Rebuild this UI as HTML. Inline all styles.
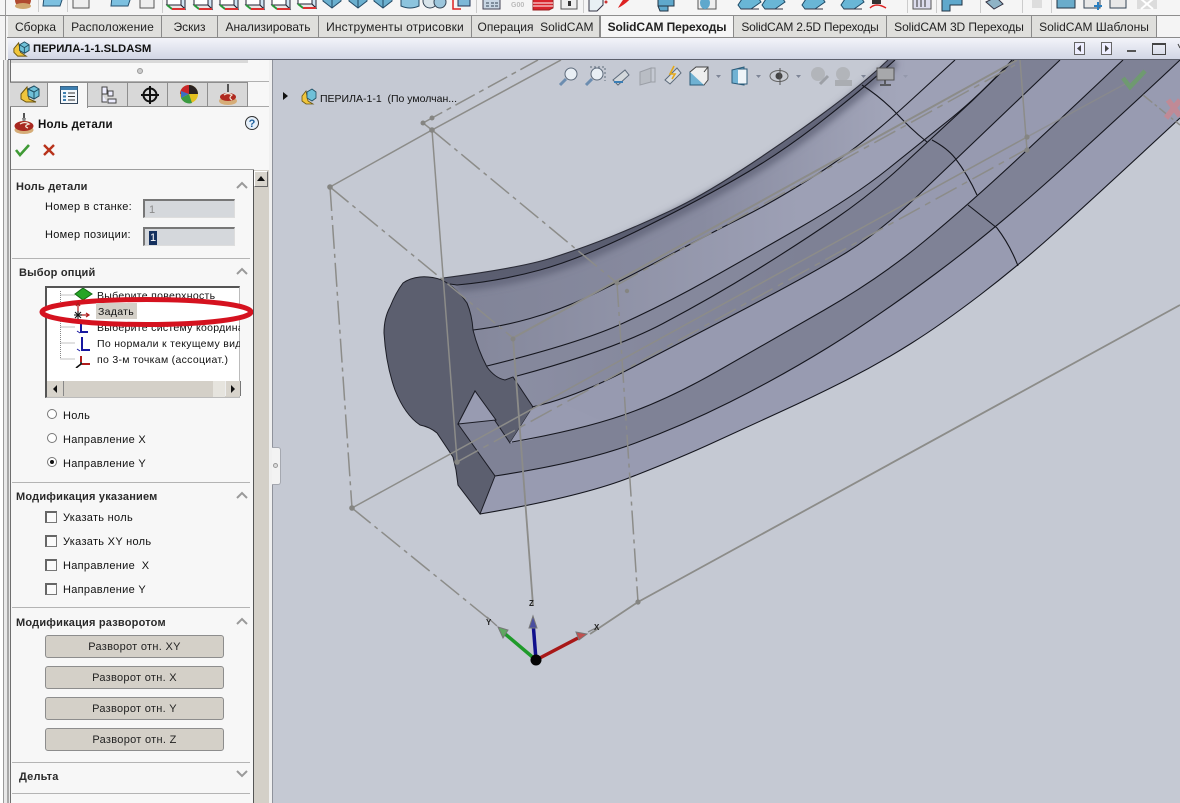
<!DOCTYPE html>
<html><head><meta charset="utf-8"><title>SolidCAM</title>
<style>
html,body{margin:0;padding:0;width:1180px;height:803px;overflow:hidden;background:#f4f4f4}
body{position:relative;font-family:"Liberation Sans",Arial,sans-serif;font-size:11px;color:#111}
.a{position:absolute}
.t{position:absolute;white-space:nowrap;line-height:14px;margin-top:1px}
.b{font-weight:bold;color:#2a2a2a;letter-spacing:.2px}
.tab{position:absolute;top:16px;height:21px;line-height:22px;text-align:center;font-size:12px;color:#222;background:#dfdfdc;border-right:1px solid #8a8a8a;box-sizing:border-box;white-space:nowrap}
.d{position:absolute;left:12px;width:238px;height:1px;background:#b4b4b4}
.pt{position:absolute;top:82px;height:25px;width:40px;box-sizing:border-box;background:#d8d8d8;border:1px solid #8e8e8e;border-left:0}
.btn{position:absolute;left:45px;width:179px;height:23px;box-sizing:border-box;background:#d4d0c8;border:1px solid #8d8d8d;border-radius:3px;text-align:center;line-height:23px;font-size:11px;color:#222;letter-spacing:.3px}
.inp{position:absolute;left:143px;width:92px;height:19px;box-sizing:border-box;background:#d5d8dc;border-top:2px solid #777;border-left:2px solid #777;border-right:1px solid #ddd;border-bottom:1px solid #ddd}
.cb{position:absolute;left:45px;width:12px;height:12px;box-sizing:border-box;background:#fafafa;border:1px solid #777;border-top:2px solid #666;border-left:2px solid #666}
.rd{position:absolute;left:47px;width:10px;height:10px;box-sizing:border-box;border-radius:50%;background:#fff;border:1px solid #777}
svg{display:block;overflow:hidden}
</style></head>
<body>
<!-- top toolbar -->
<svg class="a" style="left:0;top:0" width="1180" height="15" viewBox="0 0 1180 15">
<defs>
<g id="cu"><path d="M-8 -7V7H6V-7Z" fill="#fff" stroke="#223" stroke-width="1"/><path d="M-8 7L-3 11H10L6 7Z" fill="#e8e8e8" stroke="#223"/><path d="M6 -7L10 -2V11L6 7Z" fill="#cfe4f2" stroke="#223"/><path d="M-8 7L-3 11" stroke="#2a9a3a" stroke-width="2"/><path d="M-3 11H10" stroke="#d33" stroke-width="2"/></g>
<g id="sh"><path d="M-9 -6V3L0 10L9 3V-6Z" fill="#6bb0cf" stroke="#234a66"/><path d="M0 -6V10" stroke="#234a66"/></g>
<g id="fl"><path d="M-11 6L-5 -3H8L12 3L2 10H-8Z" fill="#69b6d6" stroke="#1f4a66"/><path d="M-8 10H10" stroke="#334"/></g>
</defs>
<rect width="1180" height="15" fill="#f5f5f5"/>
<rect x="5" width="1" height="15" fill="#999"/>
<circle cx="23" cy="0" r="8" fill="#b04a30"/><ellipse cx="23" cy="6" rx="8" ry="3" fill="#d0a870"/>
<rect x="38" width="1" height="12" fill="#ccc"/>
<path d="M44 -3H63L60 6H43Z" fill="#7cc0e0" stroke="#25506e"/>
<rect x="67" width="1" height="12" fill="#ccc"/>
<rect x="73" y="-3" width="16" height="11" fill="#eee" stroke="#555"/>
<path d="M112 -3H131L128 6H111Z" fill="#7cc0e0" stroke="#25506e"/>
<rect x="140" y="-3" width="14" height="11" fill="#eee" stroke="#555"/>
<rect x="162" width="1" height="13" fill="#ccc"/>
<use href="#cu" x="175" y="-2"/><use href="#cu" x="202" y="-2"/><use href="#cu" x="228" y="-2"/><use href="#cu" x="254" y="-2"/><use href="#cu" x="280" y="-2"/><use href="#cu" x="306" y="-3"/>
<use href="#sh" x="332" y="-2"/><use href="#sh" x="358" y="-2"/><use href="#sh" x="383" y="-2"/>
<path d="M401 -2V6Q410 10 419 6V-2Z" fill="#8cc4de" stroke="#234a66"/>
<circle cx="430" cy="1" r="7" fill="#d8e4ea" stroke="#345"/><circle cx="440" cy="2" r="6" fill="#9cc6dc" stroke="#345"/>
<path d="M453 0V9H461" fill="none" stroke="#d22" stroke-width="1.5"/><path d="M458 -2H470V6H458Z" fill="#7db8d8" stroke="#235"/>
<rect x="476" width="1" height="13" fill="#ccc"/>
<rect x="483" y="-2" width="17" height="11" fill="#c8d6e4" stroke="#445"/><path d="M486 3h3M491 3h3M495 3h3M486 6h3M491 6h3M495 6h3" stroke="#345"/>
<text x="511" y="7" font-size="7" font-weight="bold" fill="#bbb" font-family="Liberation Sans">G00</text>
<path d="M533 -2H553V8L549 10H533Z" fill="#d8242c" stroke="#922"/><path d="M533 3H553M533 6H553" stroke="#fff"/>
<rect x="561" y="-2" width="16" height="11" fill="#eee" stroke="#555"/><rect x="568" y="1" width="3" height="5" fill="#333"/>
<rect x="583" width="1" height="13" fill="#ccc"/>
<path d="M589 -2H603V5L597 11H589Z" fill="#e8f0f4" stroke="#334"/><circle cx="606" cy="2" r="1.5" fill="#c33"/>
<path d="M618 8Q626 4 632 -3L625 -3Q620 4 618 8Z" fill="#d22"/>
<path d="M658 -2H674V6H658ZM658 6L660 11H668V6" fill="#5fa8cc" stroke="#234"/>
<rect x="698" y="-2" width="18" height="11" fill="#eee" stroke="#555"/><ellipse cx="705" cy="3" rx="5" ry="6" fill="#5fa8cc"/>
<use href="#fl" x="749" y="-1"/><use href="#fl" x="773" y="-1"/><use href="#fl" x="813" y="-1"/><use href="#fl" x="852" y="-1"/>
<path d="M870 8Q876 2 886 8" fill="none" stroke="#d22" stroke-width="1.5"/><rect x="872" y="-2" width="9" height="6" fill="#333"/>
<rect x="907" width="1" height="13" fill="#ccc"/>
<rect x="913" y="-2" width="18" height="11" fill="#dde" stroke="#555"/><path d="M917 0v7M921 0v7M925 0v7" stroke="#333"/>
<rect x="936" width="1" height="13" fill="#ccc"/>
<path d="M942 -2H962V5H950V11H942Z" fill="#5fa8cc" stroke="#234"/>
<rect x="980" width="1" height="13" fill="#ccc"/>
<path d="M986 2L996 -3L1003 4L994 9Z" fill="#8fb3c6" stroke="#334"/>
<rect x="1022" width="1" height="13" fill="#ccc"/>
<path d="M1032 -2H1042V8H1032Z" fill="#ddd"/>
<rect x="1051" width="1" height="13" fill="#ccc"/>
<rect x="1057" y="-2" width="18" height="10" fill="#6aaccb" stroke="#234"/><rect x="1084" y="-2" width="16" height="10" fill="#e8e8e8" stroke="#345"/><path d="M1098 2v8M1094 6h8" stroke="#2a7fc0" stroke-width="2"/><rect x="1110" y="-2" width="16" height="10" fill="#e8e8e8" stroke="#345"/>
<rect x="1137" y="-2" width="20" height="11" fill="#dcdcdc"/><path d="M1141 -1L1153 9M1153 -1L1141 9" stroke="#fff" stroke-width="2"/>
</svg>
<!-- ribbon tabs -->
<div class="a" style="left:0;top:15px;width:1180px;height:1px;background:#8e8e8e"></div>
<div class="a" style="left:5px;top:15px;width:1px;height:788px;background:#999"></div>
<div class="a" style="left:8px;top:16px;width:1148px;height:21px;background:#dfdfdc"></div>
<div class="tab" style="left:8px;width:56px">Сборка</div>
<div class="tab" style="left:64px;width:98px;letter-spacing:.1px">Расположение</div>
<div class="tab" style="left:162px;width:56px">Эскиз</div>
<div class="tab" style="left:218px;width:101px">Анализировать</div>
<div class="tab" style="left:319px;width:153px;letter-spacing:.15px">Инструменты отрисовки</div>
<div class="tab" style="left:472px;width:128px">Операция&nbsp; SolidCAM</div>
<div class="tab" style="left:600px;width:134px;background:#f6f6f6;font-weight:bold;border-left:1px solid #8a8a8a;letter-spacing:-.1px">SolidCAM Переходы</div>
<div class="tab" style="left:734px;width:153px;letter-spacing:-.2px">SolidCAM 2.5D Переходы</div>
<div class="tab" style="left:887px;width:145px;letter-spacing:-.1px">SolidCAM 3D Переходы</div>
<div class="tab" style="left:1032px;width:125px">SolidCAM Шаблоны</div>
<div class="a" style="left:7px;top:37px;width:1173px;height:1px;background:#8a8a8a"></div>
<!-- title bar -->
<div class="a" style="left:8px;top:38px;width:1172px;height:21px;background:linear-gradient(#f3f4fa,#d2d6e5)"></div>
<div class="a" style="left:8px;top:59px;width:1172px;height:1px;background:#5c5f6c"></div>
<svg class="a" style="left:12px;top:40px" width="19" height="19" viewBox="0 0 20 20"><path d="M2 9L7 3L9 13L15 17H6L2 13Z" fill="#f0c53c" stroke="#6b5510"/><path d="M8 5L13 2L18 5V11L13 14L8 11Z" fill="#6fc0d8" stroke="#1e4c60"/><path d="M8 5L13 8L18 5M13 8V14" fill="none" stroke="#1e4c60"/></svg>
<div class="t" style="left:33px;top:41px;font-size:11.3px;font-weight:bold;color:#111">ПЕРИЛА-1-1.SLDASM</div>
<svg class="a" style="left:1070px;top:40px" width="110" height="17" viewBox="0 0 110 17"><rect x="4.5" y="2.5" width="10" height="12" fill="#eef" stroke="#666"/><path d="M11 5V12L7 8.5Z" fill="#444"/><rect x="31.5" y="2.5" width="10" height="12" fill="#eef" stroke="#666"/><path d="M35 5V12L39 8.5Z" fill="#444"/><rect x="57" y="10" width="9" height="2" fill="#555"/><rect x="82.5" y="3.5" width="13" height="11" fill="none" stroke="#444"/><rect x="82" y="3" width="14" height="2" fill="#444"/><path d="M108 4L110 8" stroke="#444"/></svg>

<!-- viewport -->
<div class="a" style="left:272px;top:60px;width:908px;height:743px;background:#c5c9d3"></div>
<svg class="a" style="left:272px;top:60px" width="908" height="743" viewBox="272 60 908 743">
<defs>
<linearGradient id="g1" gradientUnits="userSpaceOnUse" x1="443" y1="0" x2="880" y2="0"><stop offset="0" stop-color="#5b5e70"/><stop offset=".5" stop-color="#5a5d6f"/><stop offset="1" stop-color="#6d7084"/></linearGradient>
<linearGradient id="g2" gradientUnits="userSpaceOnUse" x1="460" y1="0" x2="900" y2="0"><stop offset="0" stop-color="#818498"/><stop offset=".55" stop-color="#888ba0"/><stop offset="1" stop-color="#a3a6ba"/></linearGradient>
<linearGradient id="g3" gradientUnits="userSpaceOnUse" x1="480" y1="0" x2="800" y2="0"><stop offset="0" stop-color="#85889c"/><stop offset="1" stop-color="#9da0b5"/></linearGradient>
<linearGradient id="g4" gradientUnits="userSpaceOnUse" x1="520" y1="0" x2="800" y2="0"><stop offset="0" stop-color="#8b8ea3"/><stop offset="1" stop-color="#7e8195"/></linearGradient>
<filter id="bl" x="-10%" y="-10%" width="120%" height="120%"><feGaussianBlur stdDeviation="4"/></filter>
</defs>
<!-- painter layers -->
<path fill="url(#g1)" d="M443 278Q520 268 551.5 258Q583 248 611.5 236.5Q640 225 670 211Q700 197 740 171Q780 145 821 115Q862 85 888 60L1180 60V803H480V514L470 440Z"/>
<path fill="url(#g2)" d="M450 284L457 285Q500 281 540 270Q580 259 635 232Q690 205 735 179.5Q780 154 822.5 120.5Q865 87 895 60L1180 60V803H480V514L470 440Z"/>
<path fill="none" stroke="#5c5f73" stroke-width="7" filter="url(#bl)" d="M457 287Q500 283 540 272Q580 261 635 234Q690 207 735 181.5Q780 156 822.5 122.5Q865 89 895 62"/>
<path fill="url(#g3)" d="M473 330Q500 327 530 318.5Q560 310 588.5 296.5Q617 283 665 257.5Q713 232 744 216.5Q775 201 817.5 174Q860 147 908 103L955 60L1180 60V803H480V514L470 440Z"/>
<path fill="#85889c" d="M487 366Q580 343 623.5 323Q667 303 707 280.5Q747 258 800 227.5Q853 197 888 169Q923 141 951.5 118Q980 95 1012 60L1180 60V803H480V514L470 440Z"/>
<path fill="url(#g4)" d="M517 376Q613 350 663 323.5Q713 297 756.5 270Q800 243 835 219Q870 195 900 167.5Q930 140 972 101L1014 60L1180 60V803H480V514L470 440Z"/>
<path fill="#979ab0" d="M532 407Q573 398 626.5 370.5Q680 343 746.5 308Q813 273 846.5 252.5Q880 232 918.5 195L1060 60L1180 60V803H480V514L470 440Z"/>
<path fill="#7f8296" d="M512 442Q580 430 623.5 415Q667 400 717 371.5Q767 343 823.5 310.5Q880 278 924 241.5Q968 205 1017.5 159Q1067 113 1123 60L1180 60V803H480V514L458 424L496 420Z"/>
<path fill="#989bb1" d="M495 476Q580 463 630 445Q680 427 730 402Q780 377 828 347.5Q876 318 936.5 273Q997 228 1070 161.5Q1143 95 1180 60V803H480V514Z"/>
<path fill="#c5c9d3" d="M480 514Q580 497 630 477.5Q680 458 713.5 442.5Q747 427 780 412Q813 397 846.5 380Q880 363 911 343.5Q942 324 980 295Q1018 266 1057.5 230.5Q1097 195 1180 118V803H440V514Z"/>
<!-- profile -->
<path fill="#5c5f6f" stroke="#1c1d26" stroke-width="1" d="M442 280Q430 276 420 277Q410 278 403 283Q396 292 390 307Q384 318 384 333Q386 365 395 390Q405 415 420 425Q430 427 437 433L453 457L456 470L458 485L480 514L495 476L458 424L475 391L510 443L533 407L513 377L505 380Q495 378 487 367Q478 350 473 330Q472 315 467 303Q458 290 447 283Z"/>
<path fill="#989bb1" stroke="#1c1d26" d="M475 391L458 424L496 420Z"/>
<path fill="#989bb1" d="M510 443L533 407L560 402L600 420L530 440Z"/>
<g fill="none" stroke="#15161e" stroke-width="1.1">
<path stroke="#2a2b36" d="M443 278Q520 268 551.5 258Q583 248 611.5 236.5Q640 225 670 211Q700 197 740 171Q780 145 821 115Q862 85 888 60"/>
<path d="M450 284L457 285Q500 281 540 270Q580 259 635 232Q690 205 735 179.5Q780 154 822.5 120.5Q865 87 895 60"/>
<path d="M473 330Q500 327 530 318.5Q560 310 588.5 296.5Q617 283 665 257.5Q713 232 744 216.5Q775 201 817.5 174Q860 147 908 103L955 60"/>
<path d="M487 366Q580 343 623.5 323Q667 303 707 280.5Q747 258 800 227.5Q853 197 888 169Q923 141 951.5 118Q980 95 1012 60"/>
<path d="M517 376Q613 350 663 323.5Q713 297 756.5 270Q800 243 835 219Q870 195 900 167.5Q930 140 972 101L1014 60"/>
<path d="M532 407Q573 398 626.5 370.5Q680 343 746.5 308Q813 273 846.5 252.5Q880 232 918.5 195L1060 60"/>
<path d="M512 442Q580 430 623.5 415Q667 400 717 371.5Q767 343 823.5 310.5Q880 278 924 241.5Q968 205 1017.5 159Q1067 113 1123 60"/>
<path d="M495 476Q580 463 630 445Q680 427 730 402Q780 377 828 347.5Q876 318 936.5 273Q997 228 1070 161.5Q1143 95 1180 60"/>
<path d="M480 514Q580 497 630 477.5Q680 458 713.5 442.5Q747 427 780 412Q813 397 846.5 380Q880 363 911 343.5Q942 324 980 295Q1018 266 1057.5 230.5Q1097 195 1180 118"/>
<path d="M862 85Q882 98 898 115Q912 130 927 142"/>
<path d="M932 140Q947 148 955 158Q968 175 977 195"/>
<path d="M968 205L997 228Q1010 245 1018 266"/>
</g>
<!-- wireframe -->
<g fill="none" stroke="#8c8c89" stroke-width="1.5">
<path d="M330 187L432 130L561 60"/>
<path d="M423 123L432 118L538 60" stroke-dasharray="22 5 5 5"/>
<path d="M423 123L432 130"/>
<path d="M432 130L457 460"/>
<path d="M330 187L352 508" stroke-dasharray="24 5 4 5"/>
<path d="M330 187L443 280L513 338" stroke-dasharray="24 5 4 5"/>
<path d="M432 130L617 283" stroke-dasharray="24 5 4 5"/>
<path d="M352 508L490 620" stroke-dasharray="24 5 4 5"/>
<path d="M352 508L1027 137"/>
<path d="M457 462L1027 149" stroke-dasharray="24 6 6 6"/>
<path d="M513 338L1017 60" stroke-width="2"/>
<path d="M617 285L1015 65" stroke-dasharray="24 6 6 6"/>
<path d="M513 338L533 605" stroke-width="1.8"/>
<path d="M617 283L638 602" stroke-dasharray="24 5 4 5"/>
<path d="M1020 60L1027 150"/>
<path d="M1027 137L1125 84" opacity=".7"/>
<path d="M1143 95L1180 125" stroke-dasharray="12 3 3 3"/>
<path d="M590 634L638 602L1180 305" stroke-width="1.8"/>
</g>
<g fill="#858582"><circle cx="330" cy="187" r="2.8"/><circle cx="432" cy="130" r="2.8"/><circle cx="423" cy="123" r="2.5"/><circle cx="432" cy="118" r="2.5"/><circle cx="352" cy="508" r="2.8"/><circle cx="457" cy="462" r="2.8"/><circle cx="513" cy="339" r="2.5"/><circle cx="617" cy="283" r="2.5"/><circle cx="627" cy="291" r="2.2"/><circle cx="638" cy="602" r="2.6"/><circle cx="1027" cy="137" r="2.6"/><circle cx="1027" cy="150" r="2.6"/></g>
<!-- triad -->
<path d="M536 660L504 633" stroke="#1f9a2a" stroke-width="3.5"/>
<path d="M536 660L533 622" stroke="#10108c" stroke-width="3.5"/>
<path d="M536 660L578 638" stroke="#a81818" stroke-width="3.5"/>
<path d="M498 627L508 630L503 638Z" fill="#5fa860" stroke="#777"/>
<path d="M533 616L537 628H529Z" fill="#4a4ea0" stroke="#777"/>
<path d="M587 634L576 632L579 640Z" fill="#c05050" stroke="#777"/>
<path d="M588 632L596 628M487 617L497 626" stroke="#888" stroke-width="1.4"/>
<circle cx="536" cy="660" r="5.5" fill="#050505"/>
<g font-family="Liberation Sans" font-size="8" font-weight="bold" fill="#222"><text x="529" y="606">Z</text><text x="486" y="625">Y</text><text x="594" y="630">X</text></g>
<!-- check + x overlay -->
<path d="M1123 78L1130 87L1145 71" fill="none" stroke="#6f9a70" stroke-width="4.5"/>
<path d="M1168 100L1180 116M1180 100L1166 118" stroke="#c08a96" stroke-width="5.5"/>
<!-- heads up toolbar -->
<g fill="none" stroke="#5d6a7a">
<circle cx="571" cy="74" r="6" fill="#e8eef4"/><path d="M566 79L560 85" stroke="#6c8db0" stroke-width="3"/>
<circle cx="597" cy="74" r="6" fill="#e8eef4"/><path d="M592 79L586 85" stroke="#6c8db0" stroke-width="3"/><path d="M590 67h15v14" stroke-dasharray="2 2"/>
<path d="M613 80L625 70L629 75L618 85Z" fill="#d4d8dc"/><path d="M623 82H614" stroke="#3b7eb5" stroke-width="2"/>
<path d="M640 72L651 68V82L640 85Z" fill="#b9bdc4" stroke="#9a9ea6"/><path d="M651 68H655V82H651" stroke="#9a9ea6"/>
<path d="M665 80L677 68L681 73L670 84Z" fill="#d8dce0"/><path d="M674 66L670 74H675L672 79" stroke="#e5a918" stroke-width="1.6"/>
<path d="M690 72H704V85H690Z" fill="#6fb1d2" stroke="#2a5a78"/><path d="M690 72L696 67H708V80L704 85M704 72L708 67" stroke="#444" fill="#eee"/>
<path d="M732 70L744 67V85L732 83Z" fill="#71b2d3" stroke="#2a5a78"/><path d="M738 69H747V84H738" fill="#eef4f8" stroke="#2a5a78"/>
</g>
<ellipse cx="779" cy="76" rx="9" ry="5.5" fill="#c8cbd2" stroke="#666"/><circle cx="779" cy="76" r="3.5" fill="#444"/><path d="M780 68V85" stroke="#555"/>
<g fill="#b2b5ba"><circle cx="818" cy="74" r="7"/><circle cx="843" cy="74" r="7"/></g>
<path d="M820 84L828 76" stroke="#9da0a6" stroke-width="3"/><rect x="835" y="80" width="17" height="6" fill="#aaadb2"/>
<rect x="877" y="68" width="17" height="12" fill="#a7a8ab" stroke="#555"/><path d="M885 80V84M880 85H891" stroke="#444" stroke-width="1.5"/>
<g fill="#7e8596"><path d="M716 75h5l-2.5 3zM756 75h5l-2.5 3zM796 75h5l-2.5 3zM861 75h5l-2.5 3z"/><path d="M903 75h5l-2.5 3z" opacity=".4"/></g>
<!-- tree node -->
<path d="M283 92L288 96L283 100Z" fill="#111"/>
<path d="M302 96L306 91L308 101L313 104H306L302 101Z" fill="#f0c53c" stroke="#6b5510" stroke-width=".8"/><path d="M307 92L312 89L316 92V98L312 101L307 98Z" fill="#6fc0d8" stroke="#1e4c60" stroke-width=".8"/>
<text x="320" y="102" font-family="Liberation Sans" font-size="10.5" fill="#111">ПЕРИЛА-1-1&#160; (По умолчан...</text>
</svg>

<!-- left panel -->
<div class="a" style="left:0;top:60px;width:3px;height:743px;background:#fff"></div>
<div class="a" style="left:3px;top:60px;width:1px;height:743px;background:#9a9a9a"></div>
<div class="a" style="left:4px;top:60px;width:6px;height:743px;background:#e9e9e9"></div>
<div class="a" style="left:7px;top:60px;width:2px;height:743px;background:#a8a8a8"></div>
<div class="a" style="left:10px;top:60px;width:1px;height:743px;background:#6f6f6f"></div>
<div class="a" style="left:11px;top:60px;width:243px;height:743px;background:#f7f7f7"></div>
<div class="a" style="left:11px;top:60px;width:237px;height:3px;background:#d9d9d9"></div>
<div class="a" style="left:253px;top:60px;width:19px;height:743px;background:#f7f7f7"></div>
<div class="a" style="left:137px;top:68px;width:6px;height:6px;border-radius:50%;background:#ccc;border:1px solid #999;box-sizing:border-box"></div>
<div class="a" style="left:11px;top:81px;width:259px;height:1px;background:#b0b0b0"></div>
<div class="a" style="left:11px;top:106px;width:259px;height:1px;background:#a8a8a8"></div>
<div class="pt" style="left:10px;width:38px"></div>
<div class="pt" style="left:48px;background:#f7f7f7;border-bottom:0;height:26px"></div>
<div class="pt" style="left:88px"></div>
<div class="pt" style="left:128px"></div>
<div class="pt" style="left:168px"></div>
<div class="pt" style="left:208px"></div>
<svg class="a" style="left:10px;top:82px" width="240" height="25" viewBox="0 0 240 25">
<path d="M11 12L17 5L19 17L26 20H16L11 17Z" fill="#f0c53c" stroke="#6b5510"/><path d="M18 7L24 4L29 7V14L24 17L18 14Z" fill="#6fc0d8" stroke="#1e4c60"/><path d="M18 7L24 10L29 7M24 10V17" fill="none" stroke="#1e4c60"/>
<rect x="50.5" y="4.5" width="17" height="17" fill="#f4f8fc" stroke="#33465a"/><rect x="50.5" y="4.5" width="17" height="3.5" fill="#3d7fb0"/><path d="M53 11h3M53 14.5h3M53 18h3" stroke="#3d7fb0" stroke-width="2"/><path d="M58 11h7M58 14.5h7M58 18h7" stroke="#333"/>
<path d="M92 5h5v7h-5zM92 12v8h5M98 9h5v5h-5zM98 17h8v4h-8zM97 8h1" fill="#eef" stroke="#444"/>
<circle cx="140" cy="13" r="6.5" fill="none" stroke="#111" stroke-width="2"/><path d="M140 4V22M131 13H149" stroke="#111" stroke-width="2"/>
<circle cx="179" cy="12" r="9" fill="#e4c020"/><path d="M179 3A9 9 0 0 1 188 12L179 12Z" fill="#2a2222"/><path d="M170 12A9 9 0 0 1 179 3V12Z" fill="#c8262a"/><path d="M171 16A9 9 0 0 0 182 21L179 12Z" fill="#3a9a40"/><path d="M171 9L179 12L171 16Z" fill="#3a6fc0"/>
<rect x="217" y="2" width="2" height="8" fill="#555"/><ellipse cx="218" cy="19" rx="9" ry="4" fill="#d6ad78"/><ellipse cx="218" cy="15" rx="8" ry="4" fill="#b02a20"/><path d="M214 13Q218 10 222 13Q218 16 222 18" fill="none" stroke="#f0e0d0" stroke-width="1.2"/>
</svg>
<!-- header -->
<svg class="a" style="left:14px;top:113px" width="22" height="22" viewBox="0 0 22 22"><rect x="9" y="0" width="2" height="8" fill="#555"/><path d="M8 5h4l-1 5h-2z" fill="#888"/><ellipse cx="10" cy="17" rx="9.5" ry="4" fill="#d6ad78"/><ellipse cx="10" cy="13" rx="9.5" ry="5" fill="#a82820"/><path d="M6 11Q11 8 15 11Q9 13 14 15" fill="none" stroke="#f2e6d8" stroke-width="1.3"/></svg>
<div class="t b" style="left:38px;top:117px;font-size:11.5px;color:#111">Ноль детали</div>
<svg class="a" style="left:244px;top:115px" width="16" height="16" viewBox="0 0 16 16"><circle cx="8" cy="8" r="6.5" fill="#e6f0fa" stroke="#333"/><text x="8" y="12" text-anchor="middle" font-size="11" font-weight="bold" fill="#1c5f9c" font-family="Liberation Sans">?</text></svg>
<svg class="a" style="left:14px;top:142px" width="45" height="16" viewBox="0 0 45 16"><path d="M2 8L6 13L15 3" fill="none" stroke="#3f9a35" stroke-width="2.6"/><path d="M30 3L40 13M40 3L30 13" stroke="#b8321a" stroke-width="2.4"/></svg>
<div class="d" style="top:169px;left:11px;width:243px;background:#9e9e9e"></div>

<!-- section 1 -->
<div class="t b" style="left:16px;top:179px">Ноль детали</div>
<div class="t" style="left:45px;top:199px;letter-spacing:.3px">Номер в станке:</div>
<div class="inp" style="top:199px"><span style="position:absolute;left:4px;top:2px;color:#8a8a8a;font-size:11px;line-height:14px">1</span></div>
<div class="t" style="left:45px;top:227px;letter-spacing:.3px">Номер позиции:</div>
<div class="inp" style="top:227px"><span style="position:absolute;left:4px;top:2px;width:8px;height:14px;background:#14305e;color:#fff;font-size:11px;line-height:14px;text-align:center">1</span></div>
<div class="d" style="top:258px"></div>
<div class="t b" style="left:19px;top:265px">Выбор опций</div>
<!-- chevrons -->
<svg class="a" style="left:234px;top:180px" width="16" height="560" viewBox="0 0 16 560"><g fill="none" stroke="#9a9a9a" stroke-width="2"><path d="M3 8L8 3L13 8"/><path d="M3 94L8 89L13 94"/><path d="M3 318L8 313L13 318"/><path d="M3 444L8 439L13 444"/></g></svg>
<svg class="a" style="left:234px;top:768px" width="16" height="12" viewBox="0 0 16 12"><path d="M3 3L8 8L13 3" fill="none" stroke="#9a9a9a" stroke-width="2"/></svg>

<!-- list box -->
<div class="a" style="left:45px;top:286px;width:195px;height:112px;box-sizing:border-box;background:#fff;border:1px solid #bbb;border-top:2px solid #555;border-left:2px solid #555"></div>
<svg class="a" style="left:47px;top:288px" width="192" height="78" viewBox="0 0 192 78"><path d="M13.5 3V71M13.5 7H28M13.5 23H28M13.5 39H28M13.5 55H28M13.5 71H28" fill="none" stroke="#888" stroke-dasharray="1 1"/><path d="M28 6L36 0L45 6L36 12Z" fill="#25a525" stroke="#146a14"/></svg>
<div class="t" style="left:97px;top:288px;font-size:10.5px;letter-spacing:.3px">Выберите поверхность</div>
<div class="t" style="left:97px;top:320px;font-size:10.5px;letter-spacing:.3px;width:143px;overflow:hidden">Выберите систему координат</div>
<div class="t" style="left:97px;top:336px;font-size:10.5px;letter-spacing:.3px;width:143px;overflow:hidden">По нормали к текущему виду</div>
<div class="t" style="left:97px;top:352px;font-size:10.5px;letter-spacing:.3px">по 3-м точкам (ассоциат.)</div>
<svg class="a" style="left:72px;top:318px" width="24" height="50" viewBox="0 0 24 50"><g fill="none" stroke="#1818a0" stroke-width="2"><path d="M9 3V14H16"/><path d="M10 19V32H18"/></g><path d="M5 13l3 2M5 31l3 2" stroke="#1818a0"/><path d="M9 38V46M9 46L4 50M9 46H18" stroke="#111" stroke-width="1.6"/><path d="M9 38V44" stroke="#b01c1c" stroke-width="2"/><path d="M10 46H18" stroke="#b01c1c" stroke-width="2"/></svg>
<!-- list scrollbar -->
<div class="a" style="left:47px;top:381px;width:192px;height:16px;background:#d4d0c8"></div>
<div class="a" style="left:213px;top:381px;width:12px;height:16px;background:#e6e4de"></div>
<div class="a" style="left:47px;top:381px;width:16px;height:15px;background:#d8d4cc;border-right:1px solid #888"></div>
<div class="a" style="left:225px;top:381px;width:14px;height:15px;background:#d8d4cc;border-left:1px solid #eee;border-right:1px solid #777"></div>
<svg class="a" style="left:47px;top:381px" width="192" height="16" viewBox="0 0 192 16"><path d="M10 4V12L6 8Z" fill="#111"/><path d="M184 4V12L188 8Z" fill="#111"/></svg>
<!-- red ellipse -->
<svg class="a" style="left:36px;top:292px" width="222" height="40" viewBox="36 292 222 40"><ellipse cx="146.5" cy="312" rx="104.5" ry="12.5" fill="#fff" stroke="#d5121f" stroke-width="5"/></svg>
<div class="a" style="left:96px;top:303px;width:41px;height:16px;background:#d4d0c8"></div>
<div class="t" style="left:98px;top:304px;font-size:10.5px;letter-spacing:.3px">Задать</div>
<svg class="a" style="left:72px;top:302px" width="20" height="20" viewBox="0 0 20 20"><path d="M6 2V11M4 4L6 1L8 4" fill="none" stroke="#b01c1c" stroke-width="1.2"/><path d="M8 13H16M14 11L17 13L14 15" fill="none" stroke="#b01c1c" stroke-width="1.2"/><path d="M2 13H10M6 9V17M3 10L9 16M9 10L3 16" stroke="#111"/></svg>

<!-- radios -->
<div class="rd" style="top:409px"></div><div class="t" style="left:63px;top:408px;letter-spacing:.3px">Ноль</div>
<div class="rd" style="top:433px"></div><div class="t" style="left:63px;top:432px;letter-spacing:.3px">Направление X</div>
<div class="rd" style="top:457px"></div><div class="a" style="left:50px;top:460px;width:4px;height:4px;border-radius:50%;background:#111"></div><div class="t" style="left:63px;top:456px;letter-spacing:.3px">Направление Y</div>
<div class="d" style="top:482px"></div>
<!-- mod -->
<div class="t b" style="left:16px;top:489px">Модификация указанием</div>
<div class="cb" style="top:511px"></div><div class="t" style="left:63px;top:510px;letter-spacing:.3px">Указать ноль</div>
<div class="cb" style="top:535px"></div><div class="t" style="left:63px;top:534px;letter-spacing:.3px">Указать XY ноль</div>
<div class="cb" style="top:559px"></div><div class="t" style="left:63px;top:558px;letter-spacing:.3px">Направление&nbsp; X</div>
<div class="cb" style="top:583px"></div><div class="t" style="left:63px;top:582px;letter-spacing:.3px">Направление Y</div>
<div class="d" style="top:607px"></div>
<div class="t b" style="left:16px;top:615px">Модификация разворотом</div>
<div class="btn" style="top:635px">Разворот отн. XY</div>
<div class="btn" style="top:666px">Разворот отн. X</div>
<div class="btn" style="top:697px">Разворот отн. Y</div>
<div class="btn" style="top:728px">Разворот отн. Z</div>
<div class="d" style="top:762px"></div>
<div class="t b" style="left:19px;top:769px">Дельта</div>
<div class="d" style="top:793px"></div>
<!-- scrollbar -->
<div class="a" style="left:253px;top:170px;width:1px;height:633px;background:#555"></div>
<div class="a" style="left:254px;top:170px;width:15px;height:633px;background:#d4d0c8"></div>
<div class="a" style="left:254px;top:171px;width:14px;height:16px;box-sizing:border-box;background:#d8d4cc;border:1px solid #fff;border-right-color:#666;border-bottom-color:#666"></div>
<svg class="a" style="left:254px;top:171px" width="14" height="16" viewBox="0 0 14 16"><path d="M3 10H11L7 5Z" fill="#111"/></svg>
<div class="a" style="left:269px;top:60px;width:3px;height:743px;background:#f0f0f0"></div>
<div class="a" style="left:272px;top:60px;width:1px;height:743px;background:#8f929b"></div>
<div class="a" style="left:272px;top:447px;width:9px;height:38px;box-sizing:border-box;background:#f3f3f3;border:1px solid #a5a8b0;border-left:0;border-radius:0 3px 3px 0"></div>
<div class="a" style="left:273px;top:463px;width:5px;height:5px;border-radius:50%;border:1px solid #999;box-sizing:border-box;background:#ddd"></div>
</body></html>
